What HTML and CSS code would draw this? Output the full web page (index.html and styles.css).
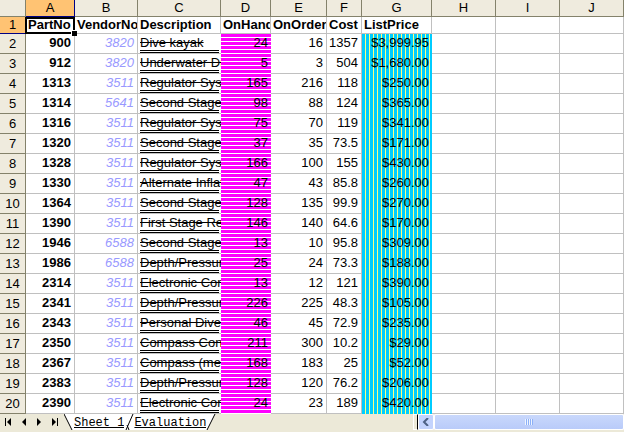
FILE: index.html
```
<!DOCTYPE html>
<html lang="en">
<head>
    <meta charset="UTF-8">
    <meta name="viewport" content="width=device-width, initial-scale=1.0">
    <title>Parts</title>
    <link rel="stylesheet" href="styles.css">
</head>
<body>
    <div class="workbook">
        <table class="sheet">
            <colgroup>
                <col class="col-num"><col class="col-a"><col class="col-b"><col class="col-c"><col class="col-d">
                <col class="col-e"><col class="col-f"><col class="col-g"><col class="col-h"><col class="col-i"><col class="col-j">
            </colgroup>
            <thead>
                <tr>
                    <th></th><th class="active">A</th><th>B</th><th>C</th><th>D</th><th>E</th><th>F</th><th>G</th><th>H</th><th>I</th><th>J</th>
                </tr>
            </thead>
            <tbody id="rows">
                <tr class="titles">
                    <th class="active">1</th>
                    <td class="selected">PartNo</td><td>VendorNo</td><td>Description</td><td>OnHand</td><td>OnOrder</td><td>Cost</td><td>ListPrice</td><td></td><td></td><td></td>
                </tr>
            </tbody>
        </table>

        <div class="bottom-bar">
            <div class="nav">
                <button type="button" aria-label="First sheet"><svg width="8" height="8"><path d="M1 0h1v8H1zM7 0v8L3 4z"/></svg></button>
                <button type="button" aria-label="Previous sheet"><svg width="8" height="8"><path d="M6 0v8L2 4z"/></svg></button>
                <button type="button" aria-label="Next sheet"><svg width="8" height="8"><path d="M2 0v8l4-4z"/></svg></button>
                <button type="button" aria-label="Last sheet"><svg width="8" height="8"><path d="M1 0v8l4-4zM6 0h1v8H6z"/></svg></button>
            </div>
            <div class="tabs">
                <svg class="edge" width="10" height="16"><path class="fill" d="M0 0h10v16H8z"/><path class="line" d="M0 0l8 16"/></svg>
                <a href="#sheet1">Sheet 1</a>
                <svg class="edge" width="10" height="16"><path class="fill" d="M0 0h10v16H0z"/><path class="line" d="M9 0L2 16M3 11l2 5"/></svg>
                <a href="#evaluation">Evaluation</a>
                <svg class="edge" width="10" height="16"><path class="fill" d="M0 0h9L1 16H0z"/><path class="line" d="M9 0L1 16"/></svg>
            </div>
            <div class="splitter"></div>
            <div class="scrollbar">
                <button type="button" class="arrow" aria-label="Scroll left"><svg width="8" height="8"><path d="M6 0L2 4l4 4"/></svg></button>
                <div class="thumb"><span class="grip"></span></div>
            </div>
        </div>
    </div>

    <script src="script.js"></script>
</body>
</html>
```

FILE: styles.css
```
* {
    margin: 0;
    padding: 0;
    box-sizing: border-box;
}

body {
    background-color: #ece9d8;
    font-family: "Liberation Sans", Arial, sans-serif;
    font-size: 13px;
    color: #000;
    overflow: hidden;
}

.workbook {
    width: 100%;
}

.sheet {
    width: 100%;
    table-layout: fixed;
    border-collapse: separate;
    border-spacing: 0;
    background-color: #fff;
}

.col-num { width: 26px; }
.col-a { width: 49px; }
.col-b { width: 63px; }
.col-c { width: 83px; }
.col-d { width: 50px; }
.col-e { width: 56px; }
.col-f { width: 35px; }
.col-g { width: 70px; }

.sheet th {
    padding-bottom: 1px;
    background-color: #efebde;
    border-right: 1px solid #84826b;
    border-bottom: 1px solid #84826b;
    font-weight: normal;
    text-align: center;
    line-height: 15px;
}

.sheet thead th {
    height: 17px;
}

.sheet th.active {
    background-color: #ffc373;
    border-color: #000084;
}

.sheet td {
    height: 20px;
    padding: 0 3px 2px 2px;
    border-right: 1px solid #c0c0c0;
    border-bottom: 1px solid #c0c0c0;
    line-height: 17px;
    text-align: right;
    white-space: nowrap;
    overflow: hidden;
}

.sheet .titles td {
    height: 17px;
    padding: 0 0 0 2px;
    line-height: 16px;
    font-weight: bold;
    text-align: left;
}

.sheet .titles .selected {
    position: relative;
    overflow: visible;
}

.selected::before {
    content: "";
    position: absolute;
    inset: 0 -1px -1px -1px;
    border: 2px solid #000;
}

.selected::after {
    content: "";
    position: absolute;
    right: -3px;
    bottom: -3px;
    width: 5px;
    height: 5px;
    background-color: #000;
    border: 1px solid #fff;
    border-width: 1px 0 0 1px;
}

.sheet .part {
    font-weight: bold;
}

.sheet .vendor {
    color: #9999ff;
    font-style: italic;
}

.sheet .desc {
    padding: 0 0 0 2px;
    border-right: 0;
    text-align: left;
}

.desc span {
    display: block;
    height: 19px;
    margin-right: 2px;
    border-bottom: 3px double #000;
    text-decoration: line-through;
}

.sheet .hand {
    padding-bottom: 3px;
    border: 0;
    background: repeating-linear-gradient(#ff00ff 0 3px, #fff 3px 4px);
}

.sheet .price {
    padding-bottom: 3px;
    border: 0;
    background: repeating-linear-gradient(90deg, #00ccff 0 3px, #ffff80 3px 4px);
}

.bottom-bar {
    display: flex;
    height: 17px;
    padding-bottom: 1px;
    background-color: #ece9d8;
}

.nav {
    display: flex;
    width: 64px;
    padding-right: 1px;
}

.nav button {
    flex: 1;
    border: 0;
    background: none;
}

.nav svg {
    display: block;
    margin: 0 auto;
}

.tabs {
    display: flex;
    flex: 1;
    font-family: "Liberation Mono", "Courier New", monospace;
    font-size: 12px;
    line-height: 18px;
}

.tabs a {
    height: 16px;
    background-color: #fff;
    color: #000;
}

.edge .fill {
    fill: #fff;
}

.edge .line {
    fill: none;
    stroke: #000;
}

.splitter {
    width: 5px;
    border: 1px solid #fff;
    border-right-color: #000;
}

.scrollbar {
    display: flex;
    width: 33%;
    background-color: #f3f1ec;
}

.arrow {
    width: 16px;
    border: 1px solid #fff;
    border-radius: 2px;
    background-color: #c3d3fd;
}

.arrow svg {
    display: block;
    margin: 0 auto;
    fill: none;
    stroke: #4d6185;
    stroke-width: 2;
}

.thumb {
    display: flex;
    flex: 1;
    align-items: center;
    justify-content: center;
    border: 1px solid #fff;
    border-radius: 2px;
    background: linear-gradient(#c9d8fc, #b9cbf9);
}

.grip {
    width: 8px;
    height: 6px;
    background: repeating-linear-gradient(90deg, #eef4fe 0 1px, #8cb0f8 1px 2px);
}
```

FILE: script.js
```
const parts = [
    [900, 3820, 'Dive kayak', 24, 16, 1357, '$3,999.95'],
    [912, 3820, 'Underwater Diver Vehicle', 5, 3, 504, '$1,680.00'],
    [1313, 3511, 'Regulator System', 165, 216, 118, '$250.00'],
    [1314, 5641, 'Second Stage Regulator', 98, 88, 124, '$365.00'],
    [1316, 3511, 'Regulator System', 75, 70, 119, '$341.00'],
    [1320, 3511, 'Second Stage Regulator', 37, 35, 73.5, '$171.00'],
    [1328, 3511, 'Regulator System', 166, 100, 155, '$430.00'],
    [1330, 3511, 'Alternate Inflation Regulator', 47, 43, 85.8, '$260.00'],
    [1364, 3511, 'Second Stage Regulator', 128, 135, 99.9, '$270.00'],
    [1390, 3511, 'First Stage Regulator', 146, 140, 64.6, '$170.00'],
    [1946, 6588, 'Second Stage Regulator', 13, 10, 95.8, '$309.00'],
    [1986, 6588, 'Depth/Pressure Gauge', 25, 24, 73.3, '$188.00'],
    [2314, 3511, 'Electronic Console', 13, 12, 121, '$390.00'],
    [2341, 3511, 'Depth/Pressure Gauge', 226, 225, 48.3, '$105.00'],
    [2343, 3511, 'Personal Dive Sonar', 46, 45, 72.9, '$235.00'],
    [2350, 3511, 'Compass Console Mount', 211, 300, 10.2, '$29.00'],
    [2367, 3511, 'Compass (meter only)', 168, 183, 25, '$52.00'],
    [2383, 3511, 'Depth/Pressure Gauge', 128, 120, 76.2, '$206.00'],
    [2390, 3511, 'Electronic Console', 24, 23, 189, '$420.00']
];

const rows = document.getElementById('rows');

parts.forEach(([part, vendor, desc, hand, order, cost, price], i) => {
    rows.insertAdjacentHTML('beforeend', `
        <tr>
            <th>${i + 2}</th>
            <td class="part">${part}</td>
            <td class="vendor">${vendor}</td>
            <td class="desc"><span>${desc}</span></td>
            <td class="hand">${hand}</td>
            <td>${order}</td>
            <td>${cost}</td>
            <td class="price">${price}</td>
            <td></td><td></td><td></td>
        </tr>
    `);
});
```
